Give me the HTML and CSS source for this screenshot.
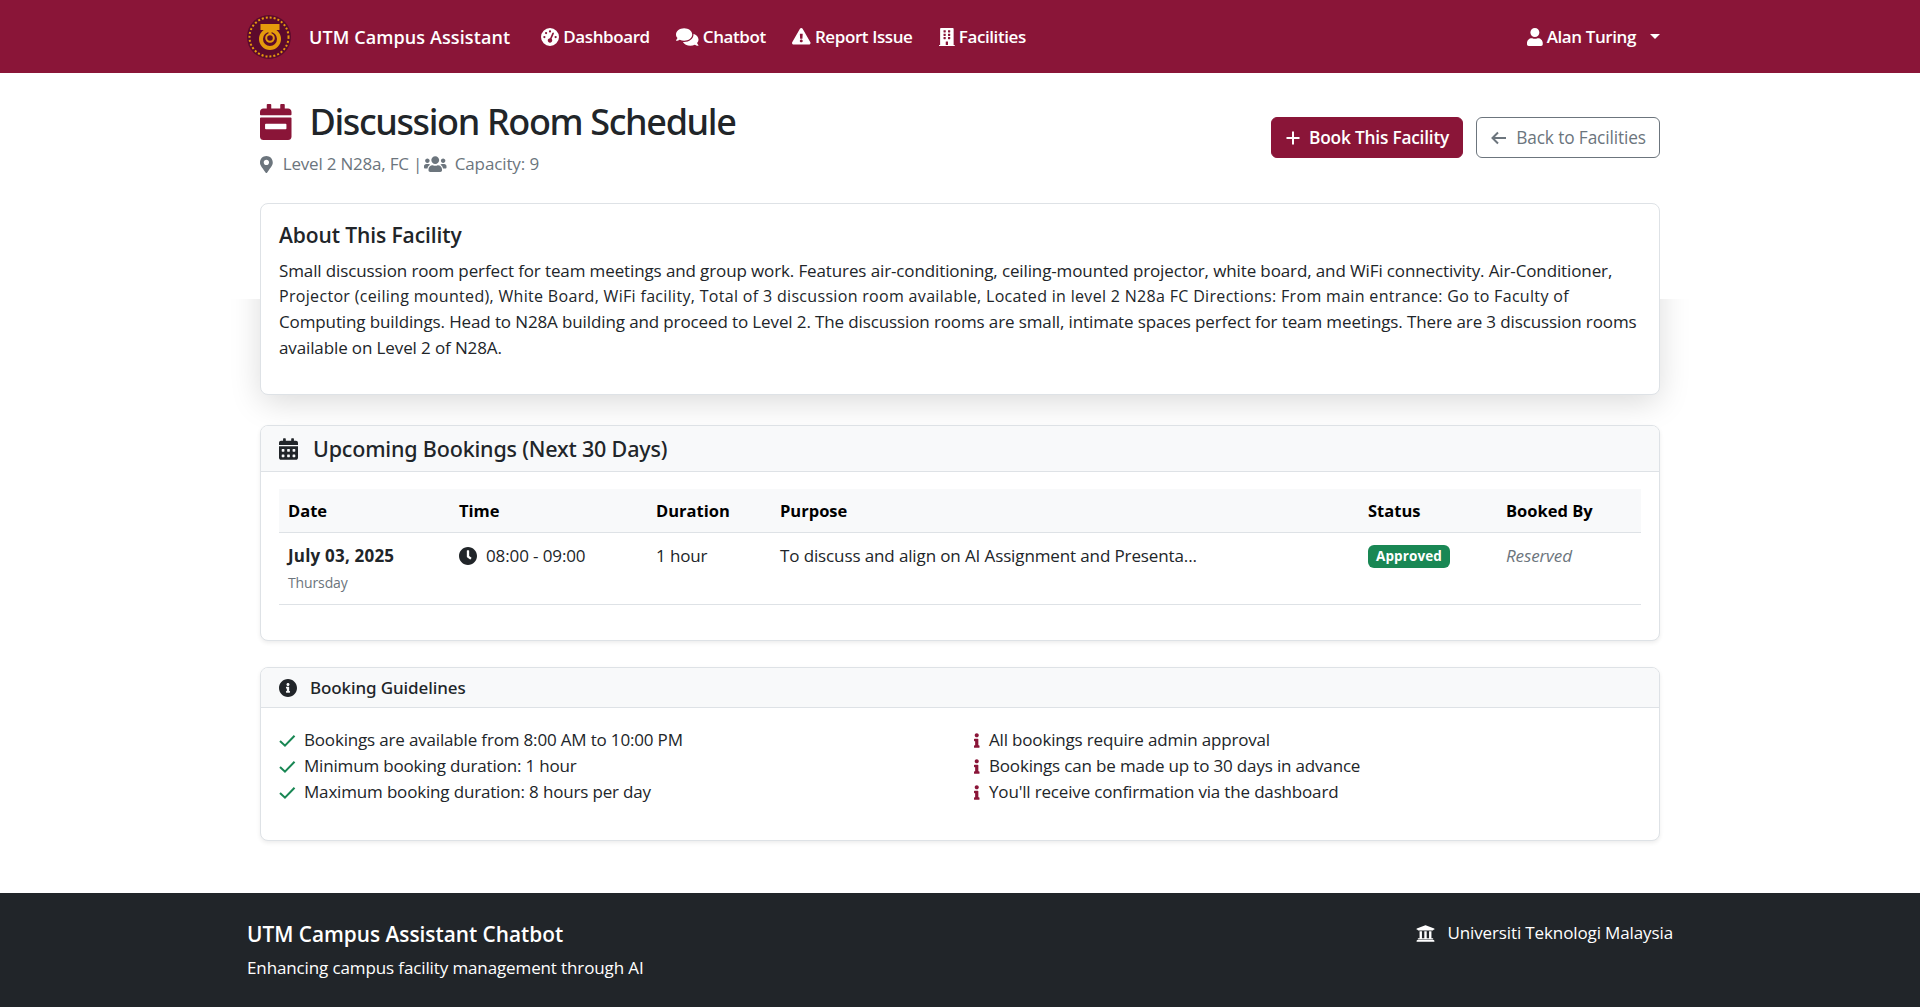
FILE: index.html
```html
<!DOCTYPE html>
<html lang="en">
<head>
<meta charset="utf-8">
<title>Discussion Room Schedule</title>
<link rel="stylesheet" href="styles.css">
</head>
<body>
<header class="navbar">
  <div class="bar-inner">
    <svg class="logo" viewBox="0 0 44 44"><circle cx="22" cy="22" r="22" fill="#5c0a2c"/><circle cx="22" cy="22" r="19.5" fill="none" stroke="#e59a0c" stroke-width="2" stroke-dasharray="2 2"/><rect x="13.5" y="9" width="19" height="6" fill="#e59a0c"/><rect x="21.5" y="15" width="3" height="5" fill="#e59a0c"/><circle cx="23" cy="24" r="9" fill="none" stroke="#e59a0c" stroke-width="4"/><circle cx="23" cy="23" r="3.8" fill="none" stroke="#e59a0c" stroke-width="2"/></svg>
    <a class="brand">UTM Campus Assistant</a>
    <nav class="nav">
      <a class="nav-link"><svg class="ic" viewBox="0 0 512 512"><path d="M0 256a256 256 0 1 1 512 0A256 256 0 1 1 0 256zM288 96a32 32 0 1 0 -64 0 32 32 0 1 0 64 0zM256 416c35.3 0 64-28.7 64-64c0-17.4-6.9-33.1-18.1-44.6L366 161.7c5.3-12.1-.2-26.3-12.3-31.6s-26.3 .2-31.6 12.3L257.9 288c-.6 0-1.3 0-1.9 0c-35.3 0-64 28.7-64 64s28.7 64 64 64zM176 144a32 32 0 1 0 -64 0 32 32 0 1 0 64 0zM96 288a32 32 0 1 0 0-64 32 32 0 1 0 0 64zm352-32a32 32 0 1 0 -64 0 32 32 0 1 0 64 0z"/></svg>Dashboard</a>
      <a class="nav-link"><svg class="ic ic-chat" viewBox="0 0 576 512"><path d="M416 192c0-88.4-93.1-160-208-160S0 103.6 0 192c0 34.3 14.1 65.9 38 92-13.4 30.2-35.5 54.2-35.8 54.5-2.2 2.3-2.8 5.7-1.5 8.7S4.8 352 8 352c36.6 0 66.9-12.3 88.7-25 32.2 15.7 70.3 25 111.3 25 114.9 0 208-71.6 208-160zm122 220c23.9-26 38-57.7 38-92 0-66.9-53.5-124.2-129.3-148.1.9 6.6 1.3 13.3 1.3 20.1 0 105.9-107.7 192-240 192-10.8 0-21.3-.8-31.7-1.9C207.8 439.6 281.8 480 368 480c41 0 79.1-9.2 111.3-25 21.8 12.7 52.1 25 88.7 25 3.2 0 6.1-1.9 7.3-4.8 1.3-2.9.7-6.3-1.5-8.7-.3-.3-22.4-24.2-35.8-54.5z"/></svg>Chatbot</a>
      <a class="nav-link"><svg class="ic ic-warn" viewBox="0 0 576 512"><path d="M569.517 440.013C587.975 472.007 564.806 512 527.94 512H48.054c-36.937 0-59.999-40.055-41.577-71.987L246.423 23.985c18.467-32.009 64.72-31.951 83.154 0l239.94 416.028zM288 354c-25.405 0-46 20.595-46 46s20.595 46 46 46 46-20.595 46-46-20.595-46-46-46zm-43.673-165.346l7.418 136c.347 6.364 5.609 11.346 11.982 11.346h48.546c6.373 0 11.635-4.982 11.982-11.346l7.418-136c.375-6.874-5.098-12.654-11.982-12.654h-63.383c-6.884 0-12.356 5.78-11.981 12.654z"/></svg>Report Issue</a>
      <a class="nav-link"><svg class="ic" viewBox="0 0 448 512"><path d="M436 480h-20V24c0-13.255-10.745-24-24-24H56C42.745 0 32 10.745 32 24v456H12c-6.627 0-12 5.373-12 12v20h448v-20c0-6.627-5.373-12-12-12zM128 76c0-6.627 5.373-12 12-12h40c6.627 0 12 5.373 12 12v40c0 6.627-5.373 12-12 12h-40c-6.627 0-12-5.373-12-12V76zm0 96c0-6.627 5.373-12 12-12h40c6.627 0 12 5.373 12 12v40c0 6.627-5.373 12-12 12h-40c-6.627 0-12-5.373-12-12v-40zm52 148h-40c-6.627 0-12-5.373-12-12v-40c0-6.627 5.373-12 12-12h40c6.627 0 12 5.373 12 12v40c0 6.627-5.373 12-12 12zm76 160h-64v-84c0-6.627 5.373-12 12-12h40c6.627 0 12 5.373 12 12v84zm64-172c0 6.627-5.373 12-12 12h-40c-6.627 0-12-5.373-12-12v-40c0-6.627 5.373-12 12-12h40c6.627 0 12 5.373 12 12v40zm0-96c0 6.627-5.373 12-12 12h-40c-6.627 0-12-5.373-12-12v-40c0-6.627 5.373-12 12-12h40c6.627 0 12 5.373 12 12v40zm0-96c0 6.627-5.373 12-12 12h-40c-6.627 0-12-5.373-12-12V76c0-6.627 5.373-12 12-12h40c6.627 0 12 5.373 12 12v40z"/></svg>Facilities</a>
    </nav>
    <a class="nav-link user"><svg class="ic" viewBox="0 0 448 512"><path d="M224 256c70.7 0 128-57.3 128-128S294.7 0 224 0 96 57.3 96 128s57.3 128 128 128zm89.6 32h-16.7c-22.2 10.2-46.9 16-72.9 16s-50.6-5.8-72.9-16h-16.7C60.2 288 0 348.2 0 422.4V464c0 26.5 21.5 48 48 48h352c26.5 0 48-21.5 48-48v-41.6c0-74.2-60.2-134.4-134.4-134.4z"/></svg>Alan Turing<span class="caret"></span></a>
  </div>
</header>

<main class="main">
  <section class="page-head">
    <div>
      <h1 class="title"><svg class="title-ic" viewBox="0 0 448 512"><path d="M436 160H12c-6.6 0-12-5.4-12-12v-36c0-26.5 21.5-48 48-48h48V12c0-6.6 5.4-12 12-12h40c6.6 0 12 5.4 12 12v52h128V12c0-6.6 5.4-12 12-12h40c6.6 0 12 5.4 12 12v52h48c26.5 0 48 21.5 48 48v36c0 6.6-5.4 12-12 12zM12 192h424c6.6 0 12 5.4 12 12v260c0 26.5-21.5 48-48 48H48c-26.5 0-48-21.5-48-48V204c0-6.6 5.4-12 12-12zm352 168c6.6 0 12-5.4 12-12v-56c0-6.6-5.4-12-12-12H84c-6.6 0-12 5.4-12 12v56c0 6.6 5.4 12 12 12h280z"/></svg>Discussion Room Schedule</h1>
      <p class="sub"><svg class="ic pin" viewBox="0 0 384 512"><path d="M172.268 501.67C26.97 291.031 0 269.413 0 192 0 85.961 85.961 0 192 0s192 85.961 192 192c0 77.413-26.97 99.031-172.268 309.67-9.535 13.774-29.93 13.773-39.464 0zM192 272c44.183 0 80-35.817 80-80s-35.817-80-80-80-80 35.817-80 80 35.817 80 80 80z"/></svg><span class="sub-place">Level 2 N28a, FC |</span><svg class="ic users" viewBox="0 0 640 512"><path d="M96 224c35.3 0 64-28.7 64-64s-28.7-64-64-64-64 28.7-64 64 28.7 64 64 64zm448 0c35.3 0 64-28.7 64-64s-28.7-64-64-64-64 28.7-64 64 28.7 64 64 64zm32 32h-64c-17.6 0-33.5 7.1-45.1 18.6 40.3 22.1 68.9 62 75.1 109.4h66c17.7 0 32-14.3 32-32v-32c0-35.3-28.7-64-64-64zm-256 0c61.9 0 112-50.1 112-112S381.9 32 320 32 208 82.1 208 144s50.1 112 112 112zm76.8 32h-8.3c-20.8 10-43.9 16-68.5 16s-47.6-6-68.5-16h-8.3C179.6 288 128 339.6 128 403.2V432c0 26.5 21.5 48 48 48h288c26.5 0 48-21.5 48-48v-28.8c0-63.6-51.6-115.2-115.2-115.2zm-223.7-13.4C161.5 263.1 145.6 256 128 256H64c-35.3 0-64 28.7-64 64v32c0 17.7 14.3 32 32 32h65.9c6.3-47.4 34.9-87.3 75.2-109.4z"/></svg>Capacity: 9</p>
    </div>
    <div class="actions">
      <a class="btn btn-primary"><svg class="btn-ic" viewBox="0 0 16 16"><path d="M8 1.5v13M1.5 8h13"/></svg>Book This Facility</a>
      <a class="btn btn-outline"><svg class="btn-ic" viewBox="0 0 16 16"><path d="M15 8H1.5M7 2.5 1.5 8 7 13.5"/></svg>Back to Facilities</a>
    </div>
  </section>

  <section class="card about">
    <h2 class="about-title">About This Facility</h2>
    <p class="about-text"><span class="ln">Small discussion room perfect for team meetings and group work. Features air-conditioning, ceiling-mounted projector, white board, and WiFi connectivity. Air-Conditioner,</span><span class="ln ln-wide">Projector (ceiling mounted), White Board, WiFi facility, Total of 3 discussion room available, Located in level 2 N28a FC Directions: From main entrance: Go to Faculty of</span><span class="ln">Computing buildings. Head to N28A building and proceed to Level 2. The discussion rooms are small, intimate spaces perfect for team meetings. There are 3 discussion rooms</span><span class="ln">available on Level 2 of N28A.</span></p>
  </section>

  <section class="card bookings">
    <div class="card-head head-lg"><svg class="ic head-ic" viewBox="0 0 448 512"><path d="M0 464c0 26.5 21.5 48 48 48h352c26.5 0 48-21.5 48-48V192H0v272zm320-196c0-6.6 5.4-12 12-12h40c6.6 0 12 5.4 12 12v40c0 6.6-5.4 12-12 12h-40c-6.6 0-12-5.4-12-12v-40zm0 128c0-6.6 5.4-12 12-12h40c6.6 0 12 5.4 12 12v40c0 6.6-5.4 12-12 12h-40c-6.6 0-12-5.4-12-12v-40zM192 268c0-6.6 5.4-12 12-12h40c6.6 0 12 5.4 12 12v40c0 6.6-5.4 12-12 12h-40c-6.6 0-12-5.4-12-12v-40zm0 128c0-6.6 5.4-12 12-12h40c6.6 0 12 5.4 12 12v40c0 6.6-5.4 12-12 12h-40c-6.6 0-12-5.4-12-12v-40zM64 268c0-6.6 5.4-12 12-12h40c6.6 0 12 5.4 12 12v40c0 6.6-5.4 12-12 12H76c-6.6 0-12-5.4-12-12v-40zm0 128c0-6.6 5.4-12 12-12h40c6.6 0 12 5.4 12 12v40c0 6.6-5.4 12-12 12H76c-6.6 0-12-5.4-12-12v-40zM400 64h-48V16c0-8.8-7.2-16-16-16h-32c-8.8 0-16 7.2-16 16v48H160V16c0-8.8-7.2-16-16-16h-32c-8.8 0-16 7.2-16 16v48H48C21.5 64 0 85.5 0 112v48h448v-48c0-26.5-21.5-48-48-48z"/></svg>Upcoming Bookings (Next 30 Days)</div>
    <div class="card-body table-body">
      <table class="table">
        <colgroup><col class="c1"><col class="c2"><col class="c3"><col class="c4"><col class="c5"><col class="c6"></colgroup>
        <thead><tr><th>Date</th><th>Time</th><th>Duration</th><th>Purpose</th><th>Status</th><th>Booked By</th></tr></thead>
        <tbody><tr>
          <td><strong class="date">July 03, 2025</strong><small class="day">Thursday</small></td>
          <td><svg class="ic clock" viewBox="8 8 496 496"><path d="M256,8C119,8,8,119,8,256S119,504,256,504,504,393,504,256,393,8,256,8Zm92.49,313h0l-20,25a16,16,0,0,1-22.49,2.5h0l-67-49.72a40,40,0,0,1-15-31.23V112a16,16,0,0,1,16-16h32a16,16,0,0,1,16,16V256l58,42.5A16,16,0,0,1,348.49,321Z"/></svg>08:00 - 09:00</td>
          <td>1 hour</td>
          <td>To discuss and align on AI Assignment and Presenta...</td>
          <td><span class="badge">Approved</span></td>
          <td><em class="reserved">Reserved</em></td>
        </tr></tbody>
      </table>
    </div>
  </section>

  <section class="card guide">
    <div class="card-head head-sm"><svg class="ic head-ic-sm" viewBox="8 8 496 496"><path d="M256 8C119.043 8 8 119.083 8 256c0 136.997 111.043 248 248 248s248-111.003 248-248C504 119.083 392.957 8 256 8zm0 110c23.196 0 42 18.804 42 42s-18.804 42-42 42-42-18.804-42-42 18.804-42 42-42zm56 254c0 6.627-5.373 12-12 12h-88c-6.627 0-12-5.373-12-12v-24c0-6.627 5.373-12 12-12h12v-64h-12c-6.627 0-12-5.373-12-12v-24c0-6.627 5.373-12 12-12h64c6.627 0 12 5.373 12 12v100h12c6.627 0 12 5.373 12 12v24z"/></svg>Booking Guidelines</div>
    <div class="card-body guide-body">
      <ul class="list">
        <li><svg class="chk" viewBox="0 0 16 16"><path d="M0 8.5 5.3 13.5 15.5 3"/></svg>Bookings are available from 8:00 AM to 10:00 PM</li>
        <li><svg class="chk" viewBox="0 0 16 16"><path d="M0 8.5 5.3 13.5 15.5 3"/></svg>Minimum booking duration: 1 hour</li>
        <li><svg class="chk" viewBox="0 0 16 16"><path d="M0 8.5 5.3 13.5 15.5 3"/></svg>Maximum booking duration: 8 hours per day</li>
      </ul>
      <ul class="list">
        <li><svg class="inf" viewBox="0 0 192 512"><path d="M20 424.229h20V279.771H20c-11.046 0-20-8.954-20-20V212c0-11.046 8.954-20 20-20h112c11.046 0 20 8.954 20 20v212.229h20c11.046 0 20 8.954 20 20V492c0 11.046-8.954 20-20 20H20c-11.046 0-20-8.954-20-20v-47.771c0-11.046 8.954-20 20-20zM96 0C56.235 0 24 32.235 24 72s32.235 72 72 72 72-32.235 72-72S135.764 0 96 0z"/></svg>All bookings require admin approval</li>
        <li><svg class="inf" viewBox="0 0 192 512"><path d="M20 424.229h20V279.771H20c-11.046 0-20-8.954-20-20V212c0-11.046 8.954-20 20-20h112c11.046 0 20 8.954 20 20v212.229h20c11.046 0 20 8.954 20 20V492c0 11.046-8.954 20-20 20H20c-11.046 0-20-8.954-20-20v-47.771c0-11.046 8.954-20 20-20zM96 0C56.235 0 24 32.235 24 72s32.235 72 72 72 72-32.235 72-72S135.764 0 96 0z"/></svg>Bookings can be made up to 30 days in advance</li>
        <li><svg class="inf" viewBox="0 0 192 512"><path d="M20 424.229h20V279.771H20c-11.046 0-20-8.954-20-20V212c0-11.046 8.954-20 20-20h112c11.046 0 20 8.954 20 20v212.229h20c11.046 0 20 8.954 20 20V492c0 11.046-8.954 20-20 20H20c-11.046 0-20-8.954-20-20v-47.771c0-11.046 8.954-20 20-20zM96 0C56.235 0 24 32.235 24 72s32.235 72 72 72 72-32.235 72-72S135.764 0 96 0z"/></svg>You'll receive confirmation via the dashboard</li>
      </ul>
    </div>
  </section>
</main>

<footer class="footer">
  <div class="bar-inner foot-inner">
    <div>
      <h3 class="foot-title">UTM Campus Assistant Chatbot</h3>
      <p class="foot-sub">Enhancing campus facility management through AI</p>
    </div>
    <p class="foot-right"><svg class="ic uni" viewBox="0 0 512 512"><path d="M496 128v16a8 8 0 0 1-8 8h-24v12c0 6.627-5.373 12-12 12H60c-6.627 0-12-5.373-12-12v-12H24a8 8 0 0 1-8-8v-16a8 8 0 0 1 4.941-7.392l232-88a7.996 7.996 0 0 1 6.118 0l232 88A8 8 0 0 1 496 128zm-24 304H40c-13.255 0-24 10.745-24 24v16a8 8 0 0 0 8 8h464a8 8 0 0 0 8-8v-16c0-13.255-10.745-24-24-24zM96 192v192H60c-6.627 0-12 5.373-12 12v20h416v-20c0-6.627-5.373-12-12-12h-36V192h-64v192h-64V192h-64v192h-64V192H96z"/></svg>Universiti Teknologi Malaysia</p>
  </div>
</footer>
</body>
</html>
```

FILE: styles.css
```css
* { box-sizing: border-box; }
html, body { margin: 0; padding: 0; }
body {
  font-family: "Open Sans", "Noto Sans", sans-serif;
  font-size: 17px;
  letter-spacing: -0.12px;
  line-height: 24px;
  color: #212529;
  background: #fff;
  min-height: 1007px;
  display: flex;
  flex-direction: column;
}
.ic { fill: currentColor; height: 16px; width: auto; flex: none; }

.navbar { background: #8a1538; height: 73px; color: #fff; display: flex; }
.bar-inner { width: 1426px; margin: 0 auto; display: flex; align-items: center; }
.logo { width: 44px; height: 44px; margin-right: 18px; flex: none; }
.brand { font-size: 18px; font-weight: 600; letter-spacing: 0.1px; margin-right: 31px; white-space: nowrap; }
.nav { display: flex; gap: 26.5px; flex: 1; }
.nav-link { display: inline-flex; align-items: center; gap: 4px; font-weight: 600; letter-spacing: -0.4px; white-space: nowrap; }
.nav-link .ic { height: 18px; }
.nav-link .ic-chat { height: 20px; }
.nav-link .ic-warn { height: 16.5px; }
.caret { width: 0; height: 0; margin-left: 10px; border-top: 5px solid #fff; border-left: 5px solid transparent; border-right: 5px solid transparent; }
.user { margin-right: 13px; }

.main { width: 1400px; margin: 0 auto; flex: 1; }
.page-head { display: flex; justify-content: space-between; height: 130px; }
.title { margin: 27px 0 0; font-family: "Noto Sans", "Open Sans", sans-serif; font-size: 36px; line-height: 43px; font-weight: 500; letter-spacing: -1.36px; display: flex; align-items: center; gap: 18px; }
.title-ic { fill: #8a1538; height: 36px; width: 31.5px; }
.sub { margin: 9px 0 0; color: #6c757d; display: flex; align-items: center; white-space: pre; }
.pin { height: 17px; margin-right: 10px; }
.sub-place { letter-spacing: -0.2px; }
.users { height: 18px; margin: 0 8px 0 2px; }
.actions { display: flex; gap: 13px; margin-top: 44px; align-items: flex-start; }
.btn { height: 41px; border-radius: 6px; display: inline-flex; align-items: center; gap: 8px; padding: 0 13px; border: 1px solid #6c757d; color: #6c757d; white-space: nowrap; font-size: 17.3px; }
.btn-primary { background: #8a1538; border-color: #8a1538; color: #fff; font-weight: 600; letter-spacing: -0.2px; }
.btn-outline { padding-left: 14px; gap: 9px; }
.btn-ic { width: 16px; height: 16px; fill: none; stroke: currentColor; stroke-width: 2; }

.card { border: 1px solid #dee2e6; border-radius: 8px; background: #fff; box-shadow: 0 2px 4px rgba(0,0,0,.075); position: relative; }
.about { height: 192px; padding: 17px 18px; box-shadow: none; }
.about::before { content: ""; position: absolute; inset: 0; z-index: -1; border-radius: 8px; box-shadow: 0 8px 32px rgba(0,0,0,.15); clip-path: inset(95px -60px -60px -60px); }
.about-title { margin: 0 0 8px; font-size: 21px; line-height: 29px; font-weight: 600; letter-spacing: -0.1px; }
.about-text { margin: 0; line-height: 25.6px; }
.ln { display: block; white-space: nowrap; }
.ln-wide { font-size: 16px; letter-spacing: 0.32px; }

.bookings { margin-top: 30px; height: 216px; }
.card-head { background: #f8f9fa; border-bottom: 1px solid #dee2e6; border-radius: 7px 7px 0 0; display: flex; align-items: center; padding: 0 18px; }
.head-lg { height: 46px; font-family: "Noto Sans", "Open Sans", sans-serif; font-size: 21.5px; font-weight: 500; letter-spacing: -0.18px; }
.head-ic { height: 22px; width: 19px; margin-right: 15px; }
.head-sm { height: 40px; font-family: "Noto Sans", "Open Sans", sans-serif; font-weight: 500; letter-spacing: -0.1px; }
.head-ic-sm { height: 18px; margin-right: 13px; }
.table-body { padding: 17px 18px 0; }
.table { width: 1362px; border-collapse: collapse; table-layout: fixed; }
.c1 { width: 171px; } .c2 { width: 197px; } .c3 { width: 124px; } .c4 { width: 588px; } .c5 { width: 138px; }
.table th { background: #f8f9fa; text-align: left; height: 43px; padding: 2px 9px 0; font-size: 16.5px; letter-spacing: 0; font-weight: 700; color: #000; border-bottom: 1px solid #dee2e6; }
.table td { vertical-align: top; padding: 11px 9px 0; height: 72px; border-bottom: 1px solid #dee2e6; }
.date { display: block; font-weight: 700; letter-spacing: 0.2px; }
.day { display: block; font-size: 14px; color: #6c757d; margin-top: 4px; line-height: 21px; }
.clock { width: 18px; height: 18px; vertical-align: -3px; margin-right: 9px; }
.badge { display: inline-block; background: #198754; color: #fff; font-size: 13.5px; font-weight: 700; line-height: 23px; padding: 0 8px; border-radius: 6px; letter-spacing: 0.1px; margin-top: 1px; vertical-align: top; }
.reserved { color: #6c757d; }

.guide { margin-top: 26px; height: 174px; }
.guide-body { display: grid; grid-template-columns: 1fr 1fr; column-gap: 0; padding: 19px 18px 0; }
.list { margin: 0; padding: 0; list-style: none; line-height: 26px; letter-spacing: -0.17px; }
.list li { display: flex; align-items: center; white-space: nowrap; }
.guide-body .list + .list { margin-left: 14px; }
.chk { width: 17px; height: 15px; fill: none; stroke: #198754; stroke-width: 2.2; margin-right: 8px; }
.inf { height: 17px; width: 5.5px; fill: #8a1538; margin-right: 9.5px; }

.footer { background: #212529; color: #fff; height: 114px; margin-top: 52px; }
.foot-inner { align-items: flex-start; justify-content: space-between; }
.foot-title { margin: 26px 0 0; font-size: 20.8px; line-height: 30px; font-weight: 600; letter-spacing: 0; }
.foot-sub { margin: 7px 0 0; }
.foot-right { margin: 28px 0 0; display: flex; align-items: center; }
.uni { height: 19px; margin-right: 12px; }
```
